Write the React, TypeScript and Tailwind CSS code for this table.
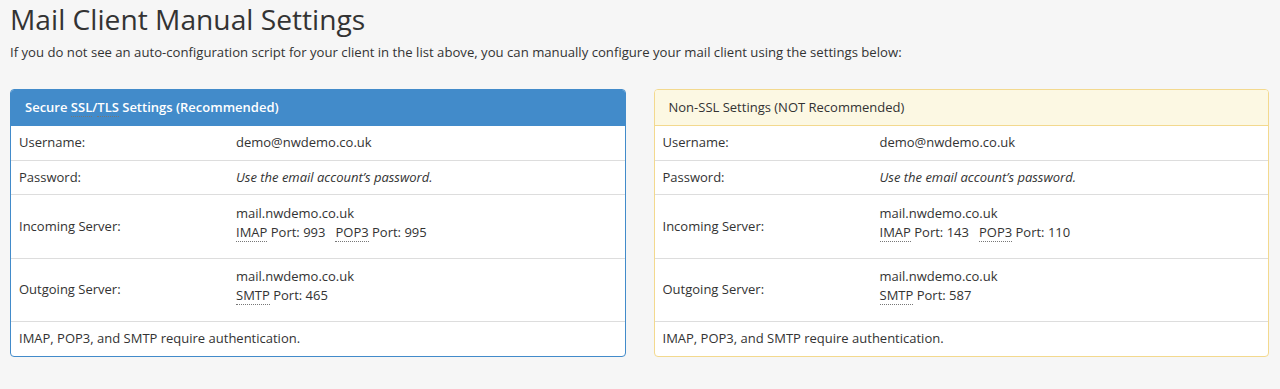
import React from "react";

const Abbr = ({ children }: { children: React.ReactNode }) => (
  <abbr className="no-underline border-b border-dotted border-[#777] cursor-help" style={{ textDecoration: "none" }}>
    {children}
  </abbr>
);

type PanelProps = {
  variant: "primary" | "warning";
  title: React.ReactNode;
  imap: string;
  pop3: string;
  smtp: string;
};

const Panel = ({ variant, title, imap, pop3, smtp }: PanelProps) => {
  const primary = variant === "primary";
  return (
    <div
      className={`flex-1 rounded-[4px] border bg-white overflow-hidden ${
        primary ? "border-[#428bca]" : "border-[#f3d98e]"
      }`}
    >
      <div
        className={`h-[36px] flex items-center px-[14px] border-b ${
          primary
            ? "bg-[#428bca] text-white font-semibold border-[#428bca]"
            : "bg-[#fcf8e3] text-[#333] border-[#f3d98e]"
        }`}
      >
        {title}
      </div>
      <div className="flex h-[35px] items-center border-b border-[#ddd] px-[8px]">
        <div className="w-[217px]">Username:</div>
        <div>demo@nwdemo.co.uk</div>
      </div>
      <div className="flex h-[34px] items-center border-b border-[#ddd] px-[8px]">
        <div className="w-[217px]">Password:</div>
        <div className="italic">Use the email account’s password.</div>
      </div>
      <div className="flex h-[64px] items-center border-b border-[#ddd] px-[8px]">
        <div className="w-[217px]">Incoming Server:</div>
        <div className="leading-[19px] -mt-[8px]">
          <div>mail.nwdemo.co.uk</div>
          <div>
            <Abbr>IMAP</Abbr> Port: {imap}
            <span className="inline-block w-[10px]" />
            <Abbr>POP3</Abbr> Port: {pop3}
          </div>
        </div>
      </div>
      <div className="flex h-[63px] items-center border-b border-[#ddd] px-[8px]">
        <div className="w-[217px]">Outgoing Server:</div>
        <div className="leading-[19px] -mt-[8px]">
          <div>mail.nwdemo.co.uk</div>
          <div>
            <Abbr>SMTP</Abbr> Port: {smtp}
          </div>
        </div>
      </div>
      <div className="flex h-[34px] items-center px-[8px]">
        IMAP, POP3, and SMTP require authentication.
      </div>
    </div>
  );
};

export default function App() {
  return (
    <div
      className="min-h-[389px] bg-[#f6f6f6] text-[#333] text-[13px] px-[10px] pt-[1px]"
      style={{ fontFamily: '"Open Sans", "Noto Sans", sans-serif' }}
    >
      <h1 className="text-[28.2px] leading-[34px] mt-[1px] text-[#333] font-normal">
        Mail Client Manual Settings
      </h1>
      <p className="mt-[7px] leading-[18px] text-[13.15px]">
        If you do not see an auto-configuration script for your client in the list above, you can manually configure
        your mail client using the settings below:
      </p>
      <div className="mt-[28px] flex gap-[28px] pr-[1px]">
        <Panel
          variant="primary"
          title={
            <span>
              Secure <Abbr>SSL</Abbr>/<Abbr>TLS</Abbr> Settings (Recommended)
            </span>
          }
          imap="993"
          pop3="995"
          smtp="465"
        />
        <Panel
          variant="warning"
          title={<span>Non-SSL Settings (NOT Recommended)</span>}
          imap="143"
          pop3="110"
          smtp="587"
        />
      </div>
    </div>
  );
}
